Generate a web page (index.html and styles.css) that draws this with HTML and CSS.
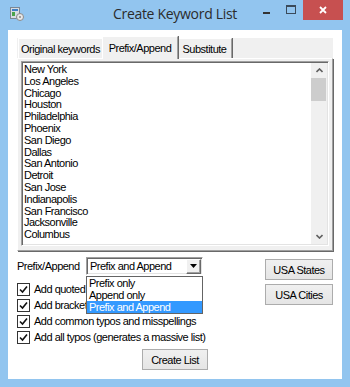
FILE: index.html
```html
<!DOCTYPE html>
<html>
<head>
<meta charset="utf-8">
<link rel="stylesheet" href="styles.css">
</head>
<body>
<div class="window">
  <div class="titlebar">
    <div class="tb-left">
      <svg class="appicon" width="15" height="15" viewBox="0 0 15 15">
        <rect x="1.5" y="1.5" width="9" height="11" fill="#d8dde3" stroke="#7b8794"/>
        <rect x="3" y="3" width="6" height="2" fill="#3f7fc4"/>
        <rect x="3" y="6" width="3" height="4" fill="#4aa34a"/>
        <circle cx="11" cy="11" r="3.5" fill="#e8e8e8" stroke="#8a8a8a"/>
        <circle cx="11" cy="11" r="1" fill="#8a8a8a"/>
      </svg>
    </div>
    <div class="title">Create Keyword List</div>
    <div class="controls">
      <div class="ctl min"><span class="dash"></span></div>
      <div class="ctl max"><span class="sq"></span></div>
      <div class="ctl close">
        <svg width="8" height="8" viewBox="0 0 8 8"><path d="M1 1L7 7M7 1L1 7" stroke="#fff" stroke-width="1.8"/></svg>
      </div>
    </div>
  </div>
  <div class="client">
    <div class="tabctl">
      <div class="tabstrip">
        <div class="tab t1">Original keywords</div>
        <div class="tab t2 sel">Prefix/Append</div>
        <div class="tab t3">Substitute</div>
      </div>
      <div class="page">
        <div class="listbox">
          <ul class="items">
            <li>New York</li>
            <li>Los Angeles</li>
            <li>Chicago</li>
            <li>Houston</li>
            <li>Philadelphia</li>
            <li>Phoenix</li>
            <li>San Diego</li>
            <li>Dallas</li>
            <li>San Antonio</li>
            <li>Detroit</li>
            <li>San Jose</li>
            <li>Indianapolis</li>
            <li>San Francisco</li>
            <li>Jacksonville</li>
            <li>Columbus</li>
          </ul>
          <div class="vscroll">
            <div class="arrow"><svg width="7" height="5" viewBox="0 0 7 5"><path d="M0.5 4L3.5 1L6.5 4" fill="none" stroke="#606060" stroke-width="1.6"/></svg></div>
            <div class="track"><div class="thumb"></div></div>
            <div class="arrow"><svg width="7" height="5" viewBox="0 0 7 5"><path d="M0.5 1L3.5 4L6.5 1" fill="none" stroke="#606060" stroke-width="1.6"/></svg></div>
          </div>
        </div>
      </div>
    </div>
    <div class="lower">
      <div class="left">
        <div class="prow">
          <span class="plabel">Prefix/Append</span>
          <div class="combo">
            <span class="combo-text">Prefix and Append</span>
            <span class="combo-btn"><svg width="7" height="4" viewBox="0 0 7 4"><path d="M0 0H7L3.5 4Z" fill="#000"/></svg></span>
            <ul class="droplist">
              <li>Prefix only</li>
              <li>Append only</li>
              <li class="hl">Prefix and Append</li>
            </ul>
          </div>
        </div>
        <div class="chk"><span class="box"><svg width="11" height="11" viewBox="0 0 11 11"><path d="M2 5.5L4.5 8L9 2.5" fill="none" stroke="#111" stroke-width="1.6"/></svg></span><span class="lbl">Add quoted keywords</span></div>
        <div class="chk"><span class="box"><svg width="11" height="11" viewBox="0 0 11 11"><path d="M2 5.5L4.5 8L9 2.5" fill="none" stroke="#111" stroke-width="1.6"/></svg></span><span class="lbl">Add bracketed keywords</span></div>
        <div class="chk"><span class="box"><svg width="11" height="11" viewBox="0 0 11 11"><path d="M2 5.5L4.5 8L9 2.5" fill="none" stroke="#111" stroke-width="1.6"/></svg></span><span class="lbl">Add common typos and misspellings</span></div>
        <div class="chk"><span class="box"><svg width="11" height="11" viewBox="0 0 11 11"><path d="M2 5.5L4.5 8L9 2.5" fill="none" stroke="#111" stroke-width="1.6"/></svg></span><span class="lbl">Add all typos (generates a massive list)</span></div>
      </div>
      <div class="right">
        <button class="btn side">USA States</button>
        <button class="btn side">USA Cities</button>
      </div>
    </div>
    <div class="bottom">
      <button class="btn create">Create List</button>
    </div>
  </div>
</div>
</body>
</html>
```
FILE: styles.css
```css
* { box-sizing: border-box; }
html, body { margin: 0; padding: 0; }
body {
  width: 350px;
  height: 387px;
  overflow: hidden;
  background: #92c5ef;
  font-family: "Liberation Sans", Arial, sans-serif;
  font-size: 11px;
  letter-spacing: -0.5px;
  color: #000;
}
.window {
  width: 350px;
  height: 387px;
  display: flex;
  flex-direction: column;
}
.titlebar {
  height: 30px;
  display: grid;
  grid-template-columns: 1fr auto 1fr;
}
.tb-left { padding: 6px 0 0 9px; }
.appicon { display: block; }
.title {
  font-family: "Open Sans", "Noto Sans", sans-serif;
  font-size: 14px;
  letter-spacing: -0.3px;
  color: #2b2b2b;
  padding-top: 4px;
  line-height: 20px;
}
.controls {
  display: flex;
  justify-content: flex-end;
  align-items: flex-start;
  padding-right: 7px;
}
.ctl {
  height: 20px;
  display: flex;
  align-items: center;
  justify-content: center;
}
.min { width: 24px; padding-right: 2px; padding-top: 5px; }
.dash { width: 7px; height: 2px; background: #333; }
.max { width: 24px; padding-bottom: 2px; }
.sq { width: 10px; height: 9px; border: 1px solid #3a4a5a; border-top-width: 2px; }
.close { width: 40px; background: #c75050; }
.close svg { display: block; }

.client {
  margin: 0 8px 8px 8px;
  height: 349px;
  background: #fff;
  padding: 6px 9px 0 9px;
  display: flex;
  flex-direction: column;
}
.tabctl {
  width: 316px;
  height: 215px;
  display: flex;
  flex-direction: column;
}
.tabstrip {
  height: 22px;
  display: flex;
  align-items: flex-end;
  background: linear-gradient(#fff 2px, #f0f0f0 2px);
  position: relative;
  z-index: 1;
}
.tab {
  height: 20px;
  background: #f0f0f0;
  border-left: 1px solid #fff;
  border-top: 1px solid #fff;
  border-right: 1px solid #a0a0a0;
  box-shadow: 1px 0 0 #696969;
  text-align: center;
  line-height: 18px;
  padding-top: 1px;
}
.t1 { width: 85px; margin-left: 1px; }
.t2 { width: 76px; }
.t3 { width: 55px; }
.tab.sel {
  height: 23px;
  margin-bottom: -1px;
  line-height: 20px;
  margin-left: -1px;
  margin-right: -1px;
  position: relative;
  z-index: 2;
}
.page {
  flex: 1;
  background: #f0f0f0;
  border-top: 1px solid #fff;
  border-left: 1px solid #fff;
  border-right: 1px solid #a0a0a0;
  border-bottom: 1px solid #a0a0a0;
  box-shadow: 1px 1px 0 #696969;
  padding: 2px 3px 4px 3px;
}
.listbox {
  height: 185px;
  border: 1px solid;
  border-color: #a0a0a0 #fff #fff #a0a0a0;
  box-shadow: inset 1px 1px 0 #696969, inset -1px -1px 0 #e3e3e3;
  background: #fff;
  padding: 1px;
  display: flex;
}
.items {
  list-style: none;
  margin: 0;
  padding: 0 0 0 1px;
  flex: 1;
  line-height: 11.8px;
  padding-top: 1px;
}
.vscroll {
  width: 17px;
  background: #f0f0f0;
  display: flex;
  flex-direction: column;
  border-left: 1px solid #fff;
}
.arrow {
  height: 15px;
  display: flex;
  align-items: center;
  justify-content: center;
}
.arrow svg { display: block; }
.track { flex: 1; }
.thumb {
  width: 15px;
  height: 23px;
  background: #cdcdcd;
}

.lower {
  display: flex;
  justify-content: space-between;
  margin-top: 6px;
}
.left { display: flex; flex-direction: column; }
.prow {
  height: 18px;
  display: flex;
  align-items: center;
  margin-bottom: 6px;
}
.plabel { width: 69px; }
.combo {
  position: relative;
  width: 117px;
  height: 18px;
  border: 1px solid;
  border-color: #a0a0a0 #fff #fff #a0a0a0;
  box-shadow: inset 1px 1px 0 #696969, inset -1px -1px 0 #e3e3e3;
  background: #fff;
  display: flex;
  align-items: center;
  padding: 1px 1px 1px 3px;
}
.combo-text { flex: 1; }
.combo-btn {
  width: 15px;
  height: 15px;
  background: #f0f0f0;
  border: 1px solid;
  border-color: #fff #696969 #696969 #fff;
  box-shadow: inset -1px -1px 0 #a0a0a0;
  display: flex;
  align-items: center;
  justify-content: center;
}
.combo-btn svg { display: block; }
.droplist {
  position: absolute;
  left: -1px;
  top: 18px;
  width: 117px;
  margin: 0;
  padding: 0;
  list-style: none;
  background: #fff;
  border: 1px solid #646464;
  z-index: 5;
  line-height: 12px;
}
.droplist li { padding-left: 2px; }
.droplist li.hl { background: #3399ff; color: #fff; }

.chk {
  height: 16px;
  display: flex;
  align-items: center;
  white-space: nowrap;
}
.box {
  width: 13px;
  height: 13px;
  border: 1px solid #333;
  background: #fff;
  margin-right: 4px;
  display: flex;
  align-items: center;
  justify-content: center;
}
.box svg { display: block; }

.right {
  display: flex;
  flex-direction: column;
  gap: 4px;
  padding-top: 2px;
}
.btn {
  font-family: "Liberation Sans", Arial, sans-serif;
  font-size: 11px;
  letter-spacing: -0.5px;
  color: #000;
  height: 21px;
  padding: 0;
  border: 1px solid #acacac;
  background: linear-gradient(#f0f0f0, #e5e5e5);
}
.side { width: 68px; }
.bottom {
  display: flex;
  justify-content: center;
  margin-top: 4px;
}
.create { width: 66px; }
```
